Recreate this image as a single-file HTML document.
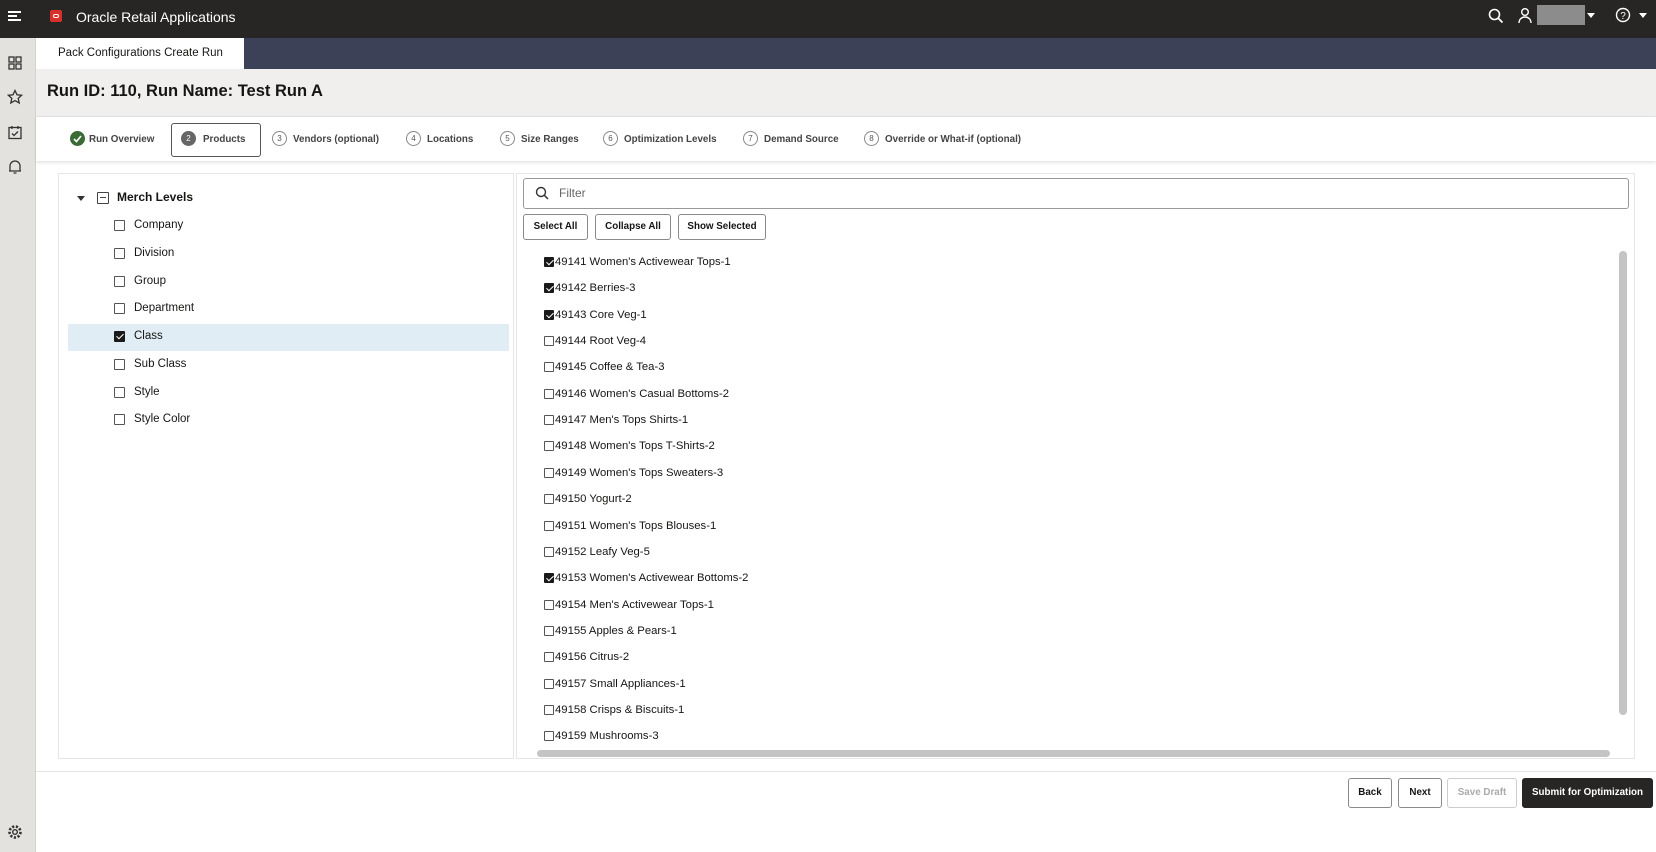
<!DOCTYPE html>
<html><head><meta charset="utf-8"><style>
*{box-sizing:border-box;margin:0;padding:0}
body{width:1656px;height:852px;overflow:hidden;font-family:"Liberation Sans",sans-serif;background:#fff;position:relative;color:#161513}
.abs{position:absolute}
.top{left:0;top:0;width:1656px;height:38px;background:#272624;color:#fff}
.side{left:0;top:38px;width:36px;height:814px;background:#e4e2df;border-right:1px solid #d6d3cf}
.tabs{left:36px;top:38px;width:1620px;height:31px;background:#3d4158}
.tab{left:36px;top:38px;width:208px;height:31px;background:#fff;font-size:11.5px;padding:9px 0 0 22px}
.title{left:36px;top:69px;width:1620px;height:47px;background:#f0efee;font-size:16.5px;font-weight:bold;padding:13px 0 0 11px}
.steps{left:36px;top:116px;width:1620px;height:45px;background:#fff;border-top:1px solid #e0e0e0;box-shadow:0 2px 3px rgba(0,0,0,.1)}
.st{position:absolute;top:17px;font-size:9.8px;font-weight:bold;color:#444;white-space:nowrap}
.c{position:absolute;width:15px;height:15px;border:1px solid #888;border-radius:50%;font-size:8px;text-align:center;line-height:13px;color:#555;font-weight:normal}
.panel{border:1px solid #e6e6e6;background:#fff}
.cb{position:absolute;width:11px;height:11px;border:1.3px solid #555;border-radius:1px;background:#fff}
.cb.on{background:#1a1a1a;border-color:#1a1a1a}
.cb.on::after{content:"";position:absolute;left:3px;top:0px;width:3px;height:6px;border:solid #fff;border-width:0 1.5px 1.5px 0;transform:rotate(45deg)}
.tr{position:absolute;font-size:11.5px}
.li{position:absolute;left:555px;font-size:11.3px;white-space:nowrap}
.btn{position:absolute;border:1px solid #8a8a8a;border-radius:3px;background:#fff;font-size:9.8px;font-weight:bold;text-align:center}
</style></head><body>
<div class="abs top">
 <div class="abs" style="left:8px;top:11px;width:13px;height:2px;background:#fff"></div>
 <div class="abs" style="left:8px;top:15px;width:9px;height:2px;background:#fff"></div>
 <div class="abs" style="left:8px;top:19px;width:13px;height:2px;background:#fff"></div>
 <div class="abs" style="left:50px;top:10px;width:12px;height:12px;background:#d8312b;border-radius:2px"></div>
 <div class="abs" style="left:53px;top:14px;width:6px;height:4px;border:1.3px solid #fff;border-radius:2px"></div>
 <div class="abs" style="left:76px;top:9px;font-size:14px">Oracle Retail Applications</div>
 <svg class="abs" style="left:1488px;top:8px" width="16" height="16" viewBox="0 0 16 16"><circle cx="6.5" cy="6.5" r="5" fill="none" stroke="#fff" stroke-width="1.6"/><path d="M10 10l4.5 4.5" stroke="#fff" stroke-width="1.8"/></svg>
 <svg class="abs" style="left:1517px;top:7px" width="16" height="18" viewBox="0 0 16 18"><circle cx="8" cy="5" r="3.3" fill="none" stroke="#fff" stroke-width="1.4"/><path d="M2 16c0-4 3-6 6-6s6 2 6 6" fill="none" stroke="#fff" stroke-width="1.4"/></svg>
 <div class="abs" style="left:1537px;top:5px;width:48px;height:20px;background:#8c8c8c"></div>
 <div class="abs" style="left:1587px;top:13px;border:4px solid transparent;border-top:5px solid #fff"></div>
 <svg class="abs" style="left:1615px;top:7px" width="16" height="16" viewBox="0 0 16 16"><circle cx="8" cy="8" r="6.5" fill="none" stroke="#fff" stroke-width="1.4"/><text x="8" y="12" font-size="10" text-anchor="middle" fill="#fff" font-family="Liberation Sans">?</text></svg>
 <div class="abs" style="left:1639px;top:13px;border:4px solid transparent;border-top:5px solid #fff"></div>
</div>
<div class="abs side">
 <svg class="abs" style="left:8px;top:18px" width="14" height="14" viewBox="0 0 14 14" fill="none" stroke="#333" stroke-width="1.3"><rect x="1" y="1" width="5" height="5"/><rect x="8" y="1" width="5" height="5"/><rect x="1" y="8" width="5" height="5"/><rect x="8" y="8" width="5" height="5"/></svg>
 <svg class="abs" style="left:7px;top:51px" width="16" height="16" viewBox="0 0 16 16"><path d="M8 1.5l2 4.3 4.6.5-3.4 3.1 1 4.6L8 11.6 3.8 14l1-4.6L1.4 6.3 6 5.8z" fill="none" stroke="#333" stroke-width="1.3"/></svg>
 <svg class="abs" style="left:8px;top:87px" width="14" height="15" viewBox="0 0 14 15" fill="none" stroke="#333" stroke-width="1.3"><rect x="1" y="2.5" width="12" height="11"/><path d="M4 1v3M10 1v3M4 8.5l2 2 4-4"/></svg>
 <svg class="abs" style="left:8px;top:121px" width="14" height="16" viewBox="0 0 14 16" fill="none" stroke="#333" stroke-width="1.3"><path d="M2 12V7a5 5 0 0 1 10 0v5zM1 12h12M5.5 14h3"/></svg>
 <svg class="abs" style="left:7px;top:786px" width="16" height="16" viewBox="0 0 16 16" fill="none" stroke="#333" stroke-width="1.4"><circle cx="8" cy="8" r="2.3"/><circle cx="8" cy="8" r="5.5" stroke-dasharray="2.2 1.6" stroke-width="2.6"/></svg>
</div>
<div class="abs tabs"></div>
<div class="abs tab">Pack Configurations Create Run</div>
<div class="abs title">Run ID: 110, Run Name: Test Run A</div>
<div class="abs steps">
 <div class="st" style="left:34px;top:14px"><span class="c" style="left:0;top:0;background:#3a6b35;border-color:#3a6b35"></span><svg style="position:absolute;left:3px;top:4px" width="9" height="8" viewBox="0 0 9 8"><path d="M1 4l2.5 2.5L8 1" stroke="#fff" stroke-width="1.6" fill="none"/></svg><span style="position:absolute;left:19px;top:3px">Run Overview</span></div>
 <div style="position:absolute;left:135px;top:6px;width:90px;height:34px;border:1.3px solid #555;border-radius:3px"></div>
 <div class="st" style="left:145px;top:14px"><span class="c" style="left:0;top:0;background:#666;border-color:#666;color:#fff">2</span><span style="position:absolute;left:22px;top:3px">Products</span></div>
 <div class="st" style="left:236px;top:14px"><span class="c" style="left:0;top:0">3</span><span style="position:absolute;left:21px;top:3px">Vendors (optional)</span></div>
 <div class="st" style="left:370px;top:14px"><span class="c" style="left:0;top:0">4</span><span style="position:absolute;left:21px;top:3px">Locations</span></div>
 <div class="st" style="left:464px;top:14px"><span class="c" style="left:0;top:0">5</span><span style="position:absolute;left:21px;top:3px">Size Ranges</span></div>
 <div class="st" style="left:567px;top:14px"><span class="c" style="left:0;top:0">6</span><span style="position:absolute;left:21px;top:3px">Optimization Levels</span></div>
 <div class="st" style="left:707px;top:14px"><span class="c" style="left:0;top:0">7</span><span style="position:absolute;left:21px;top:3px">Demand Source</span></div>
 <div class="st" style="left:828px;top:14px"><span class="c" style="left:0;top:0">8</span><span style="position:absolute;left:21px;top:3px">Override or What-if (optional)</span></div>
</div>
<div class="abs panel" style="left:58px;top:173px;width:456px;height:586px"></div>
<div class="abs panel" style="left:516px;top:173px;width:1119px;height:586px"></div>
<div class="abs" style="left:77px;top:196px;border:4px solid transparent;border-top:5px solid #333"></div>
<div class="abs" style="left:97px;top:192px;width:12px;height:12px;border:1.3px solid #444;border-radius:1px"><div style="position:absolute;left:2px;top:4px;width:6px;height:1.3px;background:#444"></div></div>
<div class="tr" style="left:117px;top:190px;font-weight:bold;font-size:12px">Merch Levels</div>
<div class="abs" style="left:68px;top:324px;width:441px;height:27px;background:#e1edf5"></div>
<div class="cb" style="left:114px;top:220px"></div><div class="tr" style="left:134px;top:219px">Company</div>
<div class="cb" style="left:114px;top:248px"></div><div class="tr" style="left:134px;top:247px">Division</div>
<div class="cb" style="left:114px;top:276px"></div><div class="tr" style="left:134px;top:275px">Group</div>
<div class="cb on" style="left:114px;top:331px"></div><div class="tr" style="left:134px;top:330px">Class</div>
<div class="cb" style="left:114px;top:303px"></div><div class="tr" style="left:134px;top:302px">Department</div>
<div class="cb" style="left:114px;top:359px"></div><div class="tr" style="left:134px;top:358px">Sub Class</div>
<div class="cb" style="left:114px;top:387px"></div><div class="tr" style="left:134px;top:386px">Style</div>
<div class="cb" style="left:114px;top:414px"></div><div class="tr" style="left:134px;top:413px">Style Color</div>
<div class="abs" style="left:523px;top:178px;width:1106px;height:31px;border:1px solid #999;border-radius:3px"></div>
<svg class="abs" style="left:535px;top:186px" width="14" height="14" viewBox="0 0 14 14"><circle cx="6" cy="6" r="4.5" fill="none" stroke="#333" stroke-width="1.4"/><path d="M9.3 9.3l3.7 3.7" stroke="#333" stroke-width="1.5"/></svg>
<div class="abs" style="left:559px;top:186px;font-size:12px;color:#666">Filter</div>
<div class="btn" style="left:523px;top:214px;width:65px;height:26px;line-height:24px">Select All</div>
<div class="btn" style="left:595px;top:214px;width:76px;height:26px;line-height:24px">Collapse All</div>
<div class="btn" style="left:678px;top:214px;width:88px;height:26px;line-height:24px">Show Selected</div>
<div id="list"></div>
<div class="abs" style="left:1619px;top:251px;width:8px;height:464px;background:#c4c4c4;border-radius:4px"></div>
<div class="abs" style="left:537px;top:750px;width:1073px;height:7px;background:#c4c4c4;border-radius:4px"></div>
<div class="abs" style="left:36px;top:771px;width:1620px;height:1px;background:#e4e4e4"></div>
<div class="btn" style="left:1348px;top:778px;width:44px;height:30px;line-height:28px">Back</div>
<div class="btn" style="left:1398px;top:778px;width:44px;height:30px;line-height:28px">Next</div>
<div class="btn" style="left:1447px;top:778px;width:70px;height:30px;line-height:28px;color:#aaa;border-color:#ccc">Save Draft</div>
<div class="btn" style="left:1522px;top:778px;width:131px;height:30px;line-height:28px;background:#272624;color:#fff;border-color:#272624">Submit for Optimization</div>
<script>
var items=[["49141 Women's Activewear Tops-1",1],["49142 Berries-3",1],["49143 Core Veg-1",1],["49144 Root Veg-4"],["49145 Coffee & Tea-3"],["49146 Women's Casual Bottoms-2"],["49147 Men's Tops Shirts-1"],["49148 Women's Tops T-Shirts-2"],["49149 Women's Tops Sweaters-3"],["49150 Yogurt-2"],["49151 Women's Tops Blouses-1"],["49152 Leafy Veg-5"],["49153 Women's Activewear Bottoms-2",1],["49154 Men's Activewear Tops-1"],["49155 Apples & Pears-1"],["49156 Citrus-2"],["49157 Small Appliances-1"],["49158 Crisps & Biscuits-1"],["49159 Mushrooms-3"]];
var h="";items.forEach(function(it,i){var y=256+i*26.35;h+='<div class="cb'+(it[1]?' on':'')+'" style="left:544px;top:'+(y+1)+'px;width:10px;height:10px"></div><div class="li" style="top:'+y+'px">'+it[0].replace("&","&amp;")+'</div>';});
document.getElementById("list").innerHTML=h;
</script>
</body></html>
